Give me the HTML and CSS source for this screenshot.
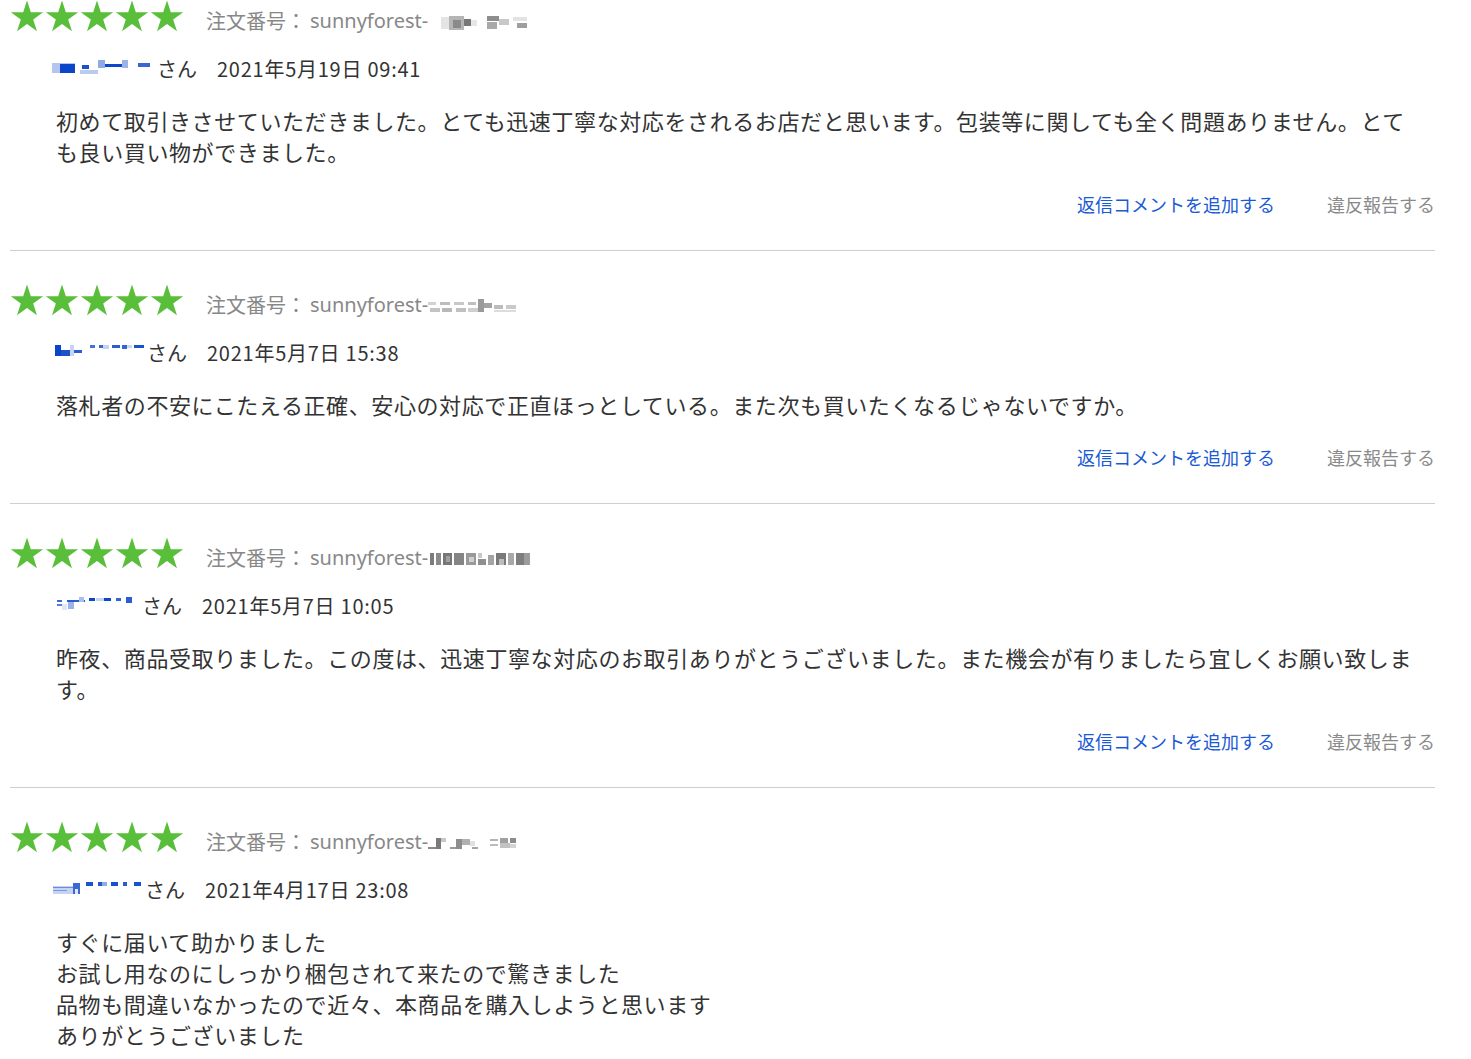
FILE: index.html
```html
<!DOCTYPE html>
<html lang="ja">
<head>
<meta charset="utf-8">
<title>レビュー</title>
<link rel="stylesheet" href="styles.css">
</head>
<body>
<svg width="0" height="0" class="defs" aria-hidden="true">
  <defs>
    <polygon id="star" points="17,0.5 20.82,12.24 33.17,12.25 23.18,19.51 26.99,31.25 17,24 7.01,31.25 10.82,19.51 0.83,12.25 13.18,12.24"/>
  </defs>
</svg>
<div class="reviews">

  <div class="review first">
    <div class="head">
      <div class="stars">
        <svg viewBox="0 0 34 32"><use href="#star"/></svg>
        <svg viewBox="0 0 34 32"><use href="#star"/></svg>
        <svg viewBox="0 0 34 32"><use href="#star"/></svg>
        <svg viewBox="0 0 34 32"><use href="#star"/></svg>
        <svg viewBox="0 0 34 32"><use href="#star"/></svg>
      </div>
      <div class="order"><span class="label">注文番号：</span><span class="code">sunnyforest-</span><svg class="mosaic spaced" width="90" height="16" viewBox="0 0 90 16">
        <rect x="0" y="3" width="8" height="12" fill="#e4e4e4"/>
        <rect x="8" y="2" width="15" height="14" fill="#b5b5b5"/>
        <rect x="12" y="6" width="8" height="8" fill="#8a8a8a"/>
        <rect x="23" y="5" width="7" height="7" fill="#777"/>
        <rect x="30" y="6" width="6" height="6" fill="#e6e6e6"/>
        <rect x="46" y="2" width="12" height="5" fill="#8d8d8d"/>
        <rect x="46" y="8" width="10" height="7" fill="#a9a9a9"/>
        <rect x="58" y="5" width="10" height="6" fill="#c8c8c8"/>
        <rect x="72" y="3" width="14" height="4" fill="#e3e3e3"/>
        <rect x="76" y="9" width="10" height="5" fill="#9e9e9e"/>
      </svg></div>
    </div>
    <div class="meta">
      <span class="user"><svg class="mosaic" width="105" height="16" viewBox="0 0 105 16">
        <rect x="0" y="4" width="23" height="10" fill="#b3c6ee"/>
        <rect x="8" y="5" width="15" height="9" fill="#0b45c9"/>
        <rect x="30" y="6" width="7" height="4" fill="#1b52cc"/>
        <rect x="28" y="11" width="18" height="4" fill="#b9cbef"/>
        <rect x="46" y="1" width="7" height="8" fill="#8eabe6"/>
        <rect x="53" y="5" width="17" height="3" fill="#0d47c9"/>
        <rect x="70" y="1" width="6" height="8" fill="#9ab4e9"/>
        <rect x="86" y="4" width="12" height="4" fill="#3a66d2"/>
      </svg>さん</span>
      <span class="date">2021年5月19日 09:41</span>
    </div>
    <p class="comment">初めて取引きさせていただきました。とても迅速丁寧な対応をされるお店だと思います。包装等に関しても全く問題ありません。とても良い買い物ができました。</p>
    <div class="actions">
      <a class="reply" href="#">返信コメントを追加する</a>
      <a class="report" href="#">違反報告する</a>
    </div>
  </div>

  <div class="review">
    <div class="head">
      <div class="stars">
        <svg viewBox="0 0 34 32"><use href="#star"/></svg>
        <svg viewBox="0 0 34 32"><use href="#star"/></svg>
        <svg viewBox="0 0 34 32"><use href="#star"/></svg>
        <svg viewBox="0 0 34 32"><use href="#star"/></svg>
        <svg viewBox="0 0 34 32"><use href="#star"/></svg>
      </div>
      <div class="order"><span class="label">注文番号：</span><span class="code">sunnyforest-</span><svg class="mosaic" width="94" height="16" viewBox="0 0 94 16">
        <rect x="0" y="4" width="8" height="3" fill="#d2d2d2"/>
        <rect x="2" y="10" width="10" height="4" fill="#c4c4c4"/>
        <rect x="12" y="4" width="10" height="3" fill="#bdbdbd"/>
        <rect x="14" y="10" width="10" height="4" fill="#b8b8b8"/>
        <rect x="26" y="4" width="10" height="3" fill="#c8c8c8"/>
        <rect x="28" y="10" width="10" height="4" fill="#c0c0c0"/>
        <rect x="40" y="4" width="8" height="3" fill="#bfbfbf"/>
        <rect x="40" y="10" width="10" height="4" fill="#cfcfcf"/>
        <rect x="50" y="1" width="6" height="13" fill="#9a9a9a"/>
        <rect x="56" y="5" width="8" height="5" fill="#a3a3a3"/>
        <rect x="66" y="7" width="9" height="4" fill="#bcbcbc"/>
        <rect x="78" y="7" width="10" height="4" fill="#c9c9c9"/>
        <rect x="66" y="12" width="22" height="2" fill="#dcdcdc"/>
      </svg></div>
    </div>
    <div class="meta">
      <span class="user"><svg class="mosaic" width="95" height="16" viewBox="0 0 95 16">
        <rect x="3" y="2" width="6" height="11" fill="#0a44c8"/>
        <rect x="9" y="7" width="9" height="6" fill="#1b52cc"/>
        <rect x="18" y="2" width="4" height="11" fill="#c7d5f3"/>
        <rect x="22" y="7" width="8" height="3" fill="#2d5ed0"/>
        <rect x="38" y="2" width="5" height="3" fill="#4572d6"/>
        <rect x="47" y="2" width="4" height="3" fill="#3b69d4"/>
        <rect x="51" y="2" width="6" height="4" fill="#c4d3f3"/>
        <rect x="60" y="2" width="8" height="3" fill="#2c5dd0"/>
        <rect x="70" y="2" width="5" height="4" fill="#3565d3"/>
        <rect x="75" y="2" width="5" height="3" fill="#c9d7f4"/>
        <rect x="82" y="2" width="10" height="3" fill="#1a51cc"/>
      </svg>さん</span>
      <span class="date">2021年5月7日 15:38</span>
    </div>
    <p class="comment">落札者の不安にこたえる正確、安心の対応で正直ほっとしている。また次も買いたくなるじゃないですか。</p>
    <div class="actions">
      <a class="reply" href="#">返信コメントを追加する</a>
      <a class="report" href="#">違反報告する</a>
    </div>
  </div>

  <div class="review">
    <div class="head">
      <div class="stars">
        <svg viewBox="0 0 34 32"><use href="#star"/></svg>
        <svg viewBox="0 0 34 32"><use href="#star"/></svg>
        <svg viewBox="0 0 34 32"><use href="#star"/></svg>
        <svg viewBox="0 0 34 32"><use href="#star"/></svg>
        <svg viewBox="0 0 34 32"><use href="#star"/></svg>
      </div>
      <div class="order"><span class="label">注文番号：</span><span class="code">sunnyforest-</span><svg class="mosaic" width="106" height="16" viewBox="0 0 106 16">
        <rect x="2" y="2" width="4" height="12" fill="#7c7c7c"/>
        <rect x="8" y="2" width="5" height="12" fill="#8a8a8a"/>
        <rect x="15" y="2" width="9" height="12" fill="#777"/>
        <rect x="18" y="5" width="4" height="6" fill="#a0a0a0"/>
        <rect x="26" y="2" width="10" height="12" fill="#858585"/>
        <rect x="38" y="2" width="10" height="12" fill="#9a9a9a"/>
        <rect x="41" y="6" width="5" height="5" fill="#d0d0d0"/>
        <rect x="50" y="2" width="4" height="5" fill="#c9c9c9"/>
        <rect x="50" y="8" width="8" height="6" fill="#8f8f8f"/>
        <rect x="60" y="4" width="6" height="10" fill="#a4a4a4"/>
        <rect x="68" y="2" width="10" height="12" fill="#7a7a7a"/>
        <rect x="71" y="8" width="5" height="6" fill="#bdbdbd"/>
        <rect x="80" y="2" width="6" height="12" fill="#a8a8a8"/>
        <rect x="88" y="2" width="8" height="12" fill="#7e7e7e"/>
        <rect x="96" y="2" width="6" height="12" fill="#9c9c9c"/>
      </svg></div>
    </div>
    <div class="meta">
      <span class="user"><svg class="mosaic" width="90" height="16" viewBox="0 0 90 16">
        <rect x="5" y="4" width="5" height="2" fill="#3b69d4"/>
        <rect x="5" y="8" width="5" height="2" fill="#5a7fdb"/>
        <rect x="10" y="8" width="5" height="6" fill="#dfe7f8"/>
        <rect x="15" y="4" width="18" height="2" fill="#2c5dd0"/>
        <rect x="16" y="6" width="6" height="7" fill="#9ab4e9"/>
        <rect x="27" y="1" width="5" height="5" fill="#a9bfec"/>
        <rect x="37" y="2" width="6" height="3" fill="#0b45c9"/>
        <rect x="44" y="2" width="8" height="3" fill="#c6d4f3"/>
        <rect x="52" y="2" width="7" height="3" fill="#0d47c9"/>
        <rect x="64" y="2" width="5" height="3" fill="#3463d3"/>
        <rect x="74" y="1" width="6" height="6" fill="#2b5cd0"/>
      </svg>さん</span>
      <span class="date">2021年5月7日 10:05</span>
    </div>
    <p class="comment">昨夜、商品受取りました。この度は、迅速丁寧な対応のお取引ありがとうございました。また機会が有りましたら宜しくお願い致します。</p>
    <div class="actions">
      <a class="reply" href="#">返信コメントを追加する</a>
      <a class="report" href="#">違反報告する</a>
    </div>
  </div>

  <div class="review">
    <div class="head">
      <div class="stars">
        <svg viewBox="0 0 34 32"><use href="#star"/></svg>
        <svg viewBox="0 0 34 32"><use href="#star"/></svg>
        <svg viewBox="0 0 34 32"><use href="#star"/></svg>
        <svg viewBox="0 0 34 32"><use href="#star"/></svg>
        <svg viewBox="0 0 34 32"><use href="#star"/></svg>
      </div>
      <div class="order"><span class="label">注文番号：</span><span class="code">sunnyforest-</span><svg class="mosaic" width="106" height="16" viewBox="0 0 106 16">
        <rect x="0" y="12" width="10" height="2" fill="#8a8a8a"/>
        <rect x="8" y="3" width="5" height="11" fill="#7a7a7a"/>
        <rect x="13" y="3" width="5" height="4" fill="#c8c8c8"/>
        <rect x="22" y="12" width="8" height="2" fill="#9a9a9a"/>
        <rect x="28" y="4" width="6" height="10" fill="#8d8d8d"/>
        <rect x="34" y="4" width="8" height="6" fill="#b0b0b0"/>
        <rect x="42" y="6" width="5" height="5" fill="#e0e0e0"/>
        <rect x="44" y="12" width="6" height="2" fill="#a5a5a5"/>
        <rect x="62" y="4" width="8" height="2" fill="#b5b5b5"/>
        <rect x="62" y="9" width="8" height="2" fill="#bcbcbc"/>
        <rect x="72" y="3" width="8" height="5" fill="#a0a0a0"/>
        <rect x="72" y="8" width="10" height="5" fill="#c2c2c2"/>
        <rect x="82" y="3" width="6" height="5" fill="#8c8c8c"/>
        <rect x="82" y="9" width="6" height="4" fill="#d4d4d4"/>
      </svg></div>
    </div>
    <div class="meta">
      <span class="user"><svg class="mosaic" width="93" height="16" viewBox="0 0 93 16">
        <rect x="1" y="6" width="20" height="8" fill="#c6d4f3"/>
        <rect x="1" y="7" width="20" height="1" fill="#6a8cde"/>
        <rect x="1" y="10" width="14" height="1" fill="#7b98e1"/>
        <rect x="21" y="3" width="7" height="11" fill="#3a68d4"/>
        <rect x="23" y="9" width="3" height="5" fill="#dfe7f8"/>
        <rect x="34" y="2" width="7" height="4" fill="#1c52cc"/>
        <rect x="46" y="2" width="4" height="4" fill="#2659ce"/>
        <rect x="50" y="2" width="5" height="4" fill="#8eabe6"/>
        <rect x="59" y="2" width="7" height="4" fill="#1a51cc"/>
        <rect x="71" y="2" width="4" height="4" fill="#2c5dd0"/>
        <rect x="82" y="2" width="7" height="4" fill="#1a51cc"/>
      </svg>さん</span>
      <span class="date">2021年4月17日 23:08</span>
    </div>
    <p class="comment">すぐに届いて助かりました<br>お試し用なのにしっかり梱包されて来たので驚きました<br>品物も間違いなかったので近々、本商品を購入しようと思います<br>ありがとうございました</p>
  </div>

</div>
</body>
</html>
```

FILE: styles.css
```css
html, body {
  margin: 0;
  padding: 0;
  background: #ffffff;
}

body {
  font-family: "Noto Sans CJK JP", "Noto Sans", sans-serif;
  color: #333333;
}

.defs {
  position: absolute;
  width: 0;
  height: 0;
}

.reviews {
  margin-left: 10px;
  width: 1425px;
}

.review {
  padding-top: 33px;
  padding-bottom: 34px;
  border-bottom: 1px solid #cfcfcf;
}

.review.first {
  padding-top: 0;
}

.head {
  display: flex;
  align-items: flex-end;
  height: 32px;
  gap: 22px;
}

.stars {
  display: flex;
  gap: 1px;
  height: 32px;
}

.stars svg {
  width: 34px;
  height: 32px;
  fill: #59bf3b;
  display: block;
}

.order {
  font-size: 20px;
  line-height: 22px;
  color: #888888;
  white-space: nowrap;
  display: flex;
  align-items: center;
}

.order .code {
  font-family: "Noto Sans", "Noto Sans CJK JP", sans-serif;
  margin-left: 4px;
}

.mosaic {
  display: inline-block;
  flex: none;
}

.order .mosaic {
  margin-top: 2px;
}

.order .mosaic.spaced {
  margin-left: 13px;
}

.meta {
  margin-top: 23px;
  padding-left: 42px;
  height: 28px;
  display: flex;
  align-items: center;
  gap: 20px;
  font-size: 20px;
  line-height: 28px;
  color: #333333;
}

.user {
  display: flex;
  align-items: center;
}

.user .mosaic {
  margin-top: -4px;
}

.date {
  letter-spacing: 0.75px;
}

.comment {
  margin: 22px 0 0 0;
  padding: 0 19px 0 46px;
  font-size: 22px;
  line-height: 31px;
  letter-spacing: 0.6px;
  color: #333333;
  line-break: strict;
}

.actions {
  margin-top: 25px;
  display: flex;
  justify-content: flex-end;
  gap: 52px;
  font-size: 18px;
  line-height: 24px;
}

.actions a {
  text-decoration: none;
}

.reply {
  color: #1a5ad4;
}

.report {
  color: #8a8a8a;
}
```
